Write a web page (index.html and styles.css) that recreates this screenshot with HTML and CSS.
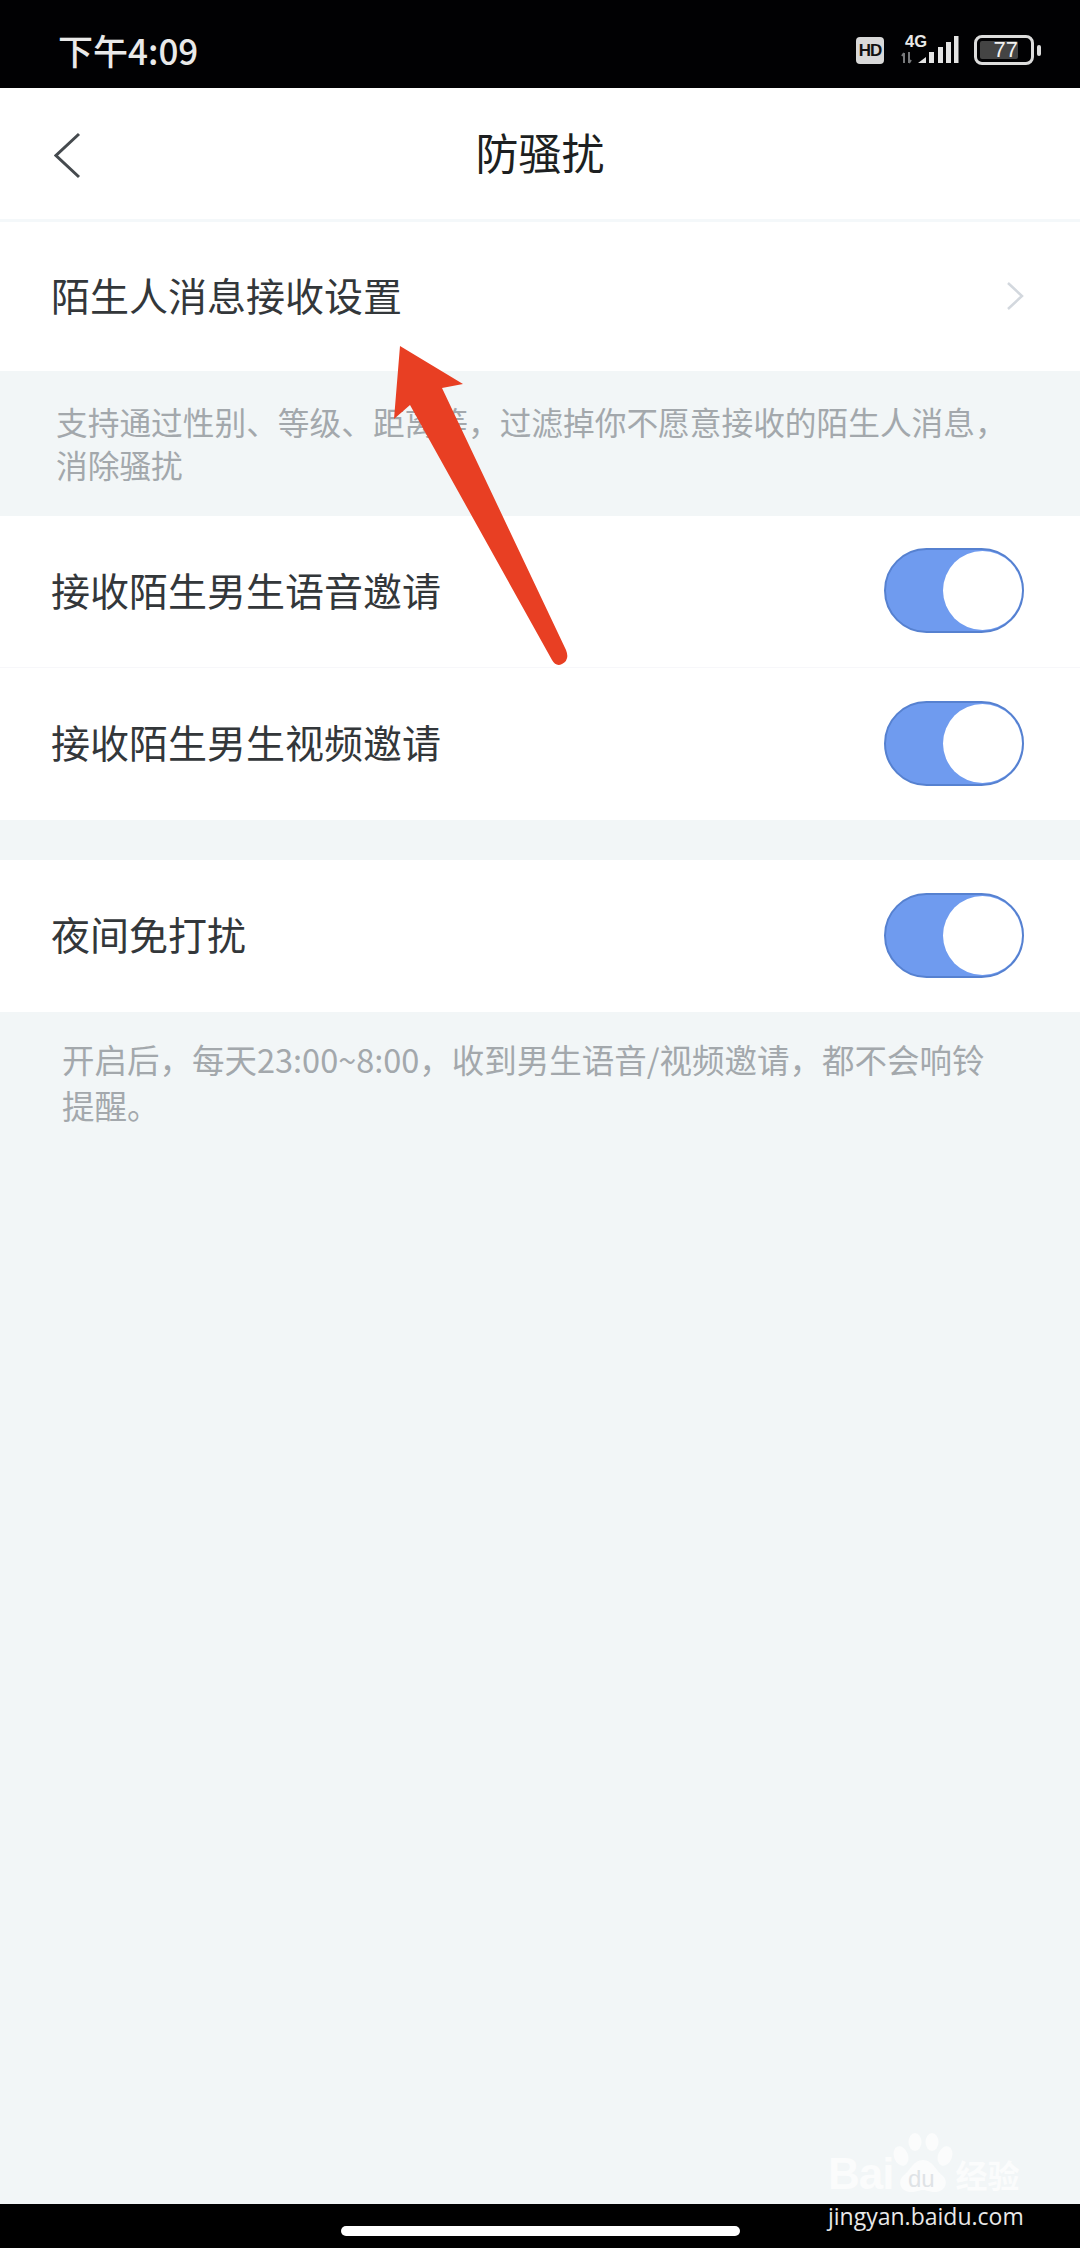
FILE: index.html
```html
<!DOCTYPE html>
<html lang="zh-CN">
<head>
  <meta charset="UTF-8">
  <title>防骚扰</title>
  <link rel="stylesheet" href="styles.css">
</head>
<body>
  <div class="screen">
    <div class="statusbar">
      <span class="clock">下午4:09</span>
      <div class="status-icons">
        <span class="hd">HD</span>
        <div class="network">
          <span class="net-label">4G</span>
          <svg class="signal" width="60" height="34" viewBox="0 0 60 34">
            <path d="M5 30V20M3 23l2-3M10 19v11M10 30l2-3" stroke="#77797b" stroke-width="2" fill="none"/>
            <path d="M19 30l8-6v6zM30 30V19h5v11zM39 30V14h5v16zM47 30V9h5v21zM55 30V3h4.500v27z" fill="#e4e4e4"/>
          </svg>
        </div>
        <div class="battery">
          <div class="battery-body"><span class="battery-level">77</span></div>
          <span class="battery-nub"></span>
        </div>
      </div>
    </div>

    <div class="navbar">
      <svg class="back" width="30" height="50" viewBox="0 0 30 50">
        <path d="M25 3L2 24.500L25 46" stroke="#454a4e" stroke-width="3" fill="none"/>
      </svg>
      <span class="title">防骚扰</span>
    </div>

    <div class="row row-first">
      <span class="label">陌生人消息接收设置</span>
      <svg width="18" height="30" viewBox="0 0 18 30">
        <path d="M2 2l14 13L2 28" stroke="#d3d8de" stroke-width="2.500" fill="none"/>
      </svg>
    </div>
    <p class="note note-top">支持通过性别、等级、距离等，过滤掉你不愿意接收的陌生人消息，消除骚扰</p>

    <div class="group">
      <div class="row row-line">
        <span class="label">接收陌生男生语音邀请</span>
        <span class="toggle"></span>
      </div>
      <div class="row">
        <span class="label">接收陌生男生视频邀请</span>
        <span class="toggle"></span>
      </div>
    </div>

    <div class="group group-night">
      <div class="row">
        <span class="label">夜间免打扰</span>
        <span class="toggle"></span>
      </div>
    </div>
    <p class="note note-bottom">开启后，每天23:00~8:00，收到男生语音/视频邀请，都不会响铃提醒。</p>

    <div class="spacer"></div>
    <div class="homebar"><span class="home-pill"></span></div>

    <!-- annotation painted over the screenshot -->
    <svg class="arrow" width="180" height="330" viewBox="0 0 180 330">
      <path d="M10 6L73 44L52 48L176 310Q180 320 172 324Q166 327 162 320L20 65L4 79Z" fill="#e83f23"/>
    </svg>

    <div class="watermark">
      <div class="wm-logo">
        <span class="wm-bai">Bai</span>
        <svg class="wm-paw" width="60" height="62" viewBox="0 0 60 62">
          <ellipse cx="8" cy="24" rx="7" ry="10" transform="rotate(-20 8 24)"/>
          <ellipse cx="22" cy="10" rx="6.500" ry="9"/>
          <ellipse cx="39" cy="10" rx="6.500" ry="9"/>
          <ellipse cx="52" cy="24" rx="7" ry="10" transform="rotate(20 52 24)"/>
          <path d="M30 28C40 28 42 38 50 44C56 50 52 60 42 60C36 60 34 58 30 58C26 58 24 60 18 60C8 60 4 50 10 44C18 38 20 28 30 28Z"/>
        </svg>
        <span class="wm-du">du</span>
        <span class="wm-jy">经验</span>
      </div>
      <div class="wm-url">jingyan.baidu.com</div>
    </div>
  </div>
</body>
</html>
```

FILE: styles.css
```css
* {
  box-sizing: border-box;
}
body {
  margin: 0;
  font-family: "Noto Sans CJK SC", "Noto Sans", sans-serif;
  background-color: #f2f6f7;
}
.screen {
  position: relative;
  width: 1080px;
  height: 2248px;
  overflow: hidden;
  display: flex;
  flex-direction: column;
}

.statusbar {
  height: 88px;
  flex-shrink: 0;
  background-color: #010103;
  display: flex;
  justify-content: space-between;
  align-items: center;
  padding: 12px 39px 0 58px;
  color: #e9e9e9;
}
.clock {
  font-size: 35px;
  font-weight: 500;
  line-height: 1;
  margin-top: -2px;
}
.status-icons {
  display: flex;
  align-items: center;
}
.hd {
  width: 28px;
  height: 27px;
  border-radius: 4px;
  background-color: #d8d8d8;
  color: #111;
  font-family: "Liberation Sans", sans-serif;
  font-size: 17px;
  font-weight: 700;
  line-height: 27px;
  text-align: center;
  letter-spacing: -1px;
}
.network {
  position: relative;
  width: 60px;
  height: 34px;
  margin-left: 15px;
}
.net-label {
  position: absolute;
  left: 6px;
  top: 0;
  font-family: "Liberation Sans", sans-serif;
  font-size: 16.500px;
  font-weight: 700;
  line-height: 1;
  z-index: 1;
}
.signal {
  display: block;
}
.battery {
  display: flex;
  align-items: center;
  margin-left: 15px;
}
.battery-body {
  width: 60px;
  height: 30px;
  border: 3px solid #dcdcdc;
  border-radius: 8px;
  padding: 3px 13px 3px 3px;
  display: flex;
}
.battery-level {
  flex: 1;
  background-color: #444;
  border-radius: 2px;
  color: #f2f2f2;
  font-family: "Liberation Sans", sans-serif;
  font-size: 22px;
  line-height: 18px;
  text-align: right;
}
.battery-nub {
  width: 4px;
  height: 11px;
  margin-left: 3px;
  border-radius: 2px;
  background-color: #dcdcdc;
}

.navbar {
  position: relative;
  height: 134px;
  flex-shrink: 0;
  background-color: #fff;
  border-bottom: 3px solid #f4f8fa;
  display: flex;
  justify-content: center;
  align-items: center;
  padding-bottom: 4px;
}
.back {
  position: absolute;
  left: 54px;
  top: 43px;
}
.title {
  font-size: 43px;
  color: #1d1f21;
  line-height: 1;
}

.row {
  height: 152px;
  flex-shrink: 0;
  background-color: #fff;
  display: flex;
  justify-content: space-between;
  align-items: center;
  padding: 0 56px 2px 51px;
  font-size: 39px;
  color: #33373a;
}
.row-first {
  height: 149px;
}
.row-line {
  border-bottom: 1px solid #f7f7fa;
}
.label {
  margin-bottom: 4px;
}

.note {
  margin: 0;
  color: #a3a8ac;
  font-size: 31.700px;
  line-height: 43px;
}
.note-top {
  height: 145px;
  flex-shrink: 0;
  padding: 29px 50px 0 56px;
}
.note-bottom {
  padding: 24px 85px 0 62px;
  font-size: 32.500px;
  line-height: 46px;
}
.group-night {
  margin-top: 40px;
}

.toggle {
  position: relative;
  width: 140px;
  height: 85px;
  border-radius: 43px;
  border: 2px solid #5681d0;
  background-color: #6f9bef;
}
.toggle::after {
  content: "";
  position: absolute;
  right: 0;
  top: 1px;
  width: 79px;
  height: 79px;
  border-radius: 50%;
  background-color: #fff;
}

.spacer {
  flex: 1;
}
.homebar {
  height: 44px;
  flex-shrink: 0;
  background-color: #000;
  display: flex;
  justify-content: center;
  padding-top: 22px;
}
.home-pill {
  width: 399px;
  height: 10px;
  border-radius: 5px;
  background-color: #fff;
}

.arrow {
  position: absolute;
  left: 390px;
  top: 340px;
}

.watermark {
  position: absolute;
  left: 828px;
  top: 2130px;
  color: #fff;
}
.wm-logo {
  display: flex;
  align-items: flex-end;
  height: 64px;
  position: relative;
}
.wm-bai {
  font-family: "Liberation Sans", sans-serif;
  font-size: 44px;
  font-weight: 700;
  line-height: 40px;
  color: #fbfcfc;
  letter-spacing: -1px;
}
.wm-paw {
  fill: #fbfcfc;
}
.wm-du {
  position: absolute;
  left: 80px;
  bottom: 3px;
  font-family: "Liberation Sans", sans-serif;
  font-size: 24px;
  line-height: 1;
  color: #dfe3e6;
}
.wm-jy {
  margin-left: 2px;
  font-size: 32px;
  font-weight: 700;
  line-height: 40px;
  color: #fbfcfc;
}
.wm-url {
  margin-top: 8px;
  font-family: "Open Sans", sans-serif;
  font-size: 23px;
  line-height: 28px;
  color: #e8e8e8;
}
```
